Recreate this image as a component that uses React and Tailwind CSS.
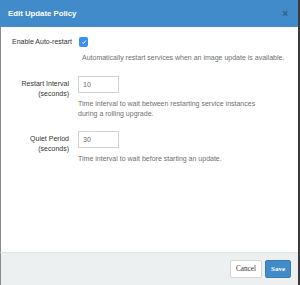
export default function App() {
  return (
    <div className="w-[300px] h-[285px] bg-[#3a3a3a] overflow-hidden" style={{ fontFamily: '"Liberation Sans", Arial, sans-serif' }}>
      <div className="w-[298px] h-[285px] flex flex-col bg-white">
        <div className="h-[27px] bg-[#428bca] flex items-center justify-between pl-[8px] pr-[10px] shrink-0">
          <span className="text-white text-[7.8px] font-bold">Edit Update Policy</span>
          <span className="text-[#2c5e8c] text-[10px] leading-none font-bold">×</span>
        </div>
        <div className="flex-1 border-l border-[#8a8a8a] pt-[10px] text-[#333] text-[7px] leading-[10px]">
          <div className="flex items-center h-[10px]">
            <div className="w-[78px] shrink-0 pl-[11px] whitespace-nowrap">Enable Auto-restart</div>
            <div className="w-[9px] h-[10px] rounded-[2px] bg-[#3b8ff0] flex items-center justify-center">
              <svg width="6" height="6" viewBox="0 0 10 10"><path d="M2 5.5 L4 7.5 L8 2.5" stroke="white" strokeWidth="1.6" fill="none" /></svg>
            </div>
          </div>
          <div className="ml-[81px] mt-[6px] text-[#6f6f6f] whitespace-nowrap">Automatically restart services when an image update is available.</div>

          <div className="flex mt-[13px]">
            <div className="w-[68px] text-right pt-[3px]">Restart Interval<br />(seconds)</div>
            <div className="ml-[9px]">
              <div className="w-[41px] h-[17px] border border-[#d2d2d2] text-[#666] pl-[4px] flex items-center">10</div>
              <div className="mt-[6px] text-[#6f6f6f] whitespace-nowrap">Time interval to wait between restarting service instances<br />during a rolling upgrade.</div>
            </div>
          </div>

          <div className="flex mt-[12px]">
            <div className="w-[68px] text-right pt-[3px]">Quiet Period<br />(seconds)</div>
            <div className="ml-[9px]">
              <div className="w-[41px] h-[17px] border border-[#d2d2d2] text-[#666] pl-[4px] flex items-center">30</div>
              <div className="mt-[6px] text-[#6f6f6f] whitespace-nowrap">Time interval to wait before starting an update.</div>
            </div>
          </div>
        </div>
        <div className="h-[33px] shrink-0 bg-[#ecf0f1] border-l border-[#8a8a8a] border-t border-t-[#e2e5e6] flex items-center justify-end pr-[7px] gap-[3px]" style={{ fontFamily: '"Liberation Serif", "Times New Roman", serif' }}>
          <div className="w-[32px] h-[18px] bg-white border border-[#d6d6d6] rounded-[2px] text-[7.2px] text-[#333] flex items-center justify-center">Cancel</div>
          <div className="w-[26px] h-[18px] bg-[#428bca] border border-[#3a7bb5] rounded-[2px] text-[7px] text-white font-bold flex items-center justify-center">Save</div>
        </div>
      </div>
    </div>
  );
}
